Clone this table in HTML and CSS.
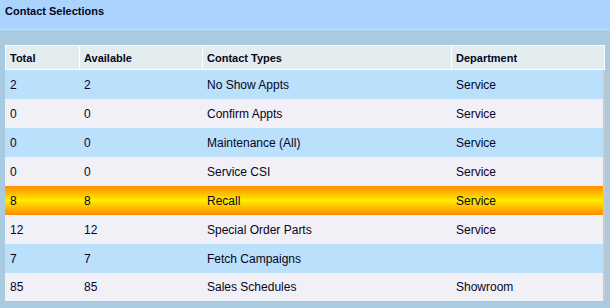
FILE: index.html
```html
<!DOCTYPE html>
<html>
<head>
<meta charset="utf-8">
<link rel="stylesheet" href="styles.css">
</head>
<body>
<div class="page">
  <div class="titlebar">Contact Selections</div>
  <div class="panel">
    <table class="grid">
      <thead>
        <tr>
          <th class="c1">Total</th>
          <th class="c2">Available</th>
          <th class="c3">Contact Types</th>
          <th class="c4">Department</th>
        </tr>
      </thead>
      <tbody>
        <tr class="blue"><td>2</td><td>2</td><td>No Show Appts</td><td>Service</td></tr>
        <tr class="light"><td>0</td><td>0</td><td>Confirm Appts</td><td>Service</td></tr>
        <tr class="blue"><td>0</td><td>0</td><td>Maintenance (All)</td><td>Service</td></tr>
        <tr class="light"><td>0</td><td>0</td><td>Service CSI</td><td>Service</td></tr>
        <tr class="selected"><td>8</td><td>8</td><td>Recall</td><td>Service</td></tr>
        <tr class="light"><td>12</td><td>12</td><td>Special Order Parts</td><td>Service</td></tr>
        <tr class="blue"><td>7</td><td>7</td><td>Fetch Campaigns</td><td></td></tr>
        <tr class="light last"><td>85</td><td>85</td><td>Sales Schedules</td><td>Showroom</td></tr>
      </tbody>
    </table>
  </div>
</div>
</body>
</html>
```

FILE: styles.css
```css
html, body {
  margin: 0;
  padding: 0;
}
body {
  background: #a8cbe2;
  font-family: "Liberation Sans", Arial, sans-serif;
  color: #05051f;
}
.page {
  width: 610px;
  height: 308px;
  overflow: hidden;
  background: #a8cbe2;
}
.titlebar {
  height: 30px;
  box-sizing: border-box;
  background: #aad4fd;
  border-bottom: 1px solid #c8dcec;
  padding: 5px 0 0 5px;
  font-size: 11px;
  font-weight: bold;
  line-height: 13px;
}
.panel {
  padding: 15px 0 0 5px;
}
.grid {
  border-collapse: separate;
  border-spacing: 0;
  table-layout: fixed;
  width: 600px;
}
.grid th {
  background: #e3ecee;
  font-size: 11px;
  font-weight: bold;
  text-align: left;
  padding: 0 0 0 4px;
  border-top: 1px solid #ffffff;
  border-bottom: 1px solid #ffffff;
  border-left: 1px solid #ffffff;
  box-sizing: border-box;
  height: 25px;
}
.grid th.c1 { width: 74px; }
.grid th.c2 { width: 123px; }
.grid th.c3 { width: 249px; }
.grid th.c4 { width: 154px; border-right: 1px solid #ffffff; }
.grid td {
  font-size: 12px;
  height: 29px;
  padding: 0 0 0 4px;
  border-left: 1px solid transparent;
  box-sizing: border-box;
  white-space: nowrap;
}
.grid td:last-child {
  border-right: 2px solid #c9c9c9;
}
.grid tr.last td {
  height: 28px;
}
.blue td { background: #bbe0fb; }
.light td { background: #f1f0f6; }
.selected td {
  background: linear-gradient(#ff8c00 0%, #ffc000 28%, #ffec00 50%, #ffc000 72%, #ff8c00 100%);
}
```
